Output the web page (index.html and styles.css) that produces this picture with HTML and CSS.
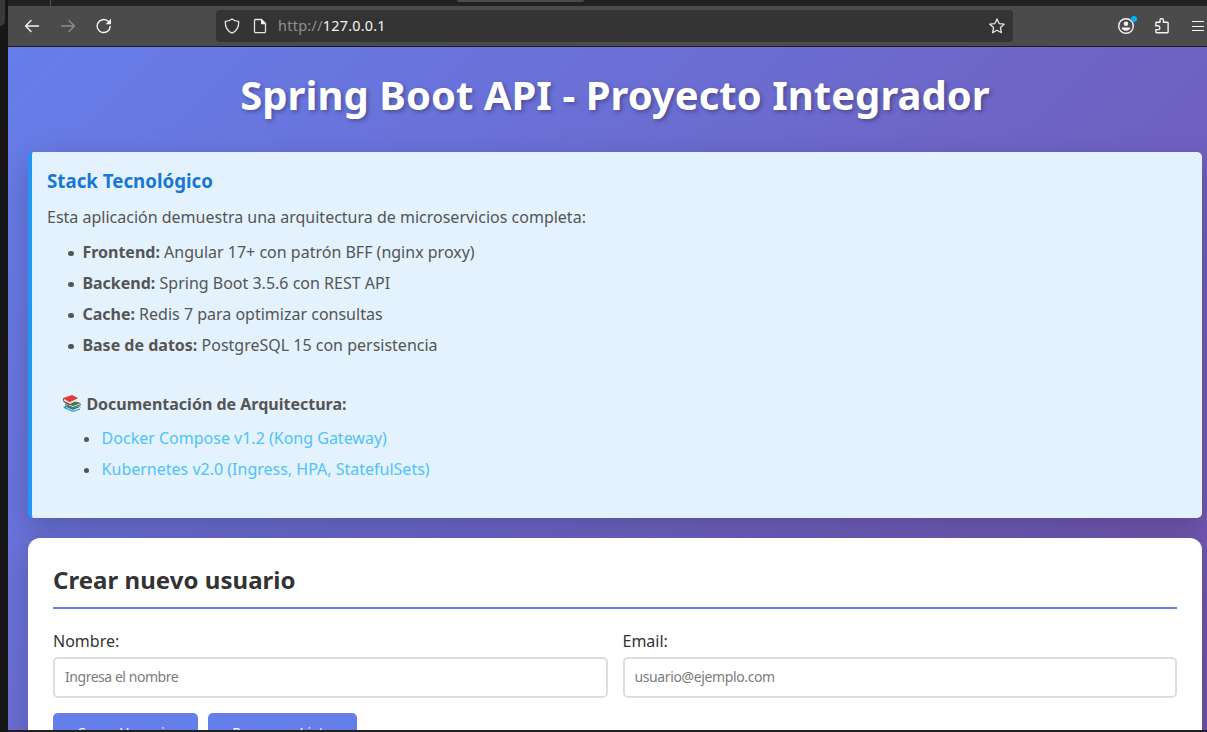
FILE: index.html
```
<!DOCTYPE html>
<html lang="es">
<head>
<meta charset="utf-8">
<title>Spring Boot API - Proyecto Integrador</title>
<link rel="stylesheet" href="styles.css">
</head>
<body>
<div class="desktop">
  <aside class="edge"><div class="edge-window"></div></aside>
  <div class="browser">
    <div class="tabstrip"><span class="tab-separator"></span><span class="tab-end"></span></div>
    <nav class="toolbar">
      <div class="nav-buttons">
        <svg class="icon" viewBox="0 0 16 16"><path d="M14.500 8H1.600M7 2.600 1.600 8 7 13.400"/></svg>
        <svg class="icon dim" viewBox="0 0 16 16"><path d="M1.500 8h12.900M9 2.600 14.400 8 9 13.400"/></svg>
        <svg class="icon reload-icon" viewBox="0 0 16 16"><path d="M14.200 8.400A6.500 6.500 0 1 1 11.800 3l1.400 1.300"/><path class="solid" d="M15 .8v5.400H9.600z"/></svg>
      </div>
      <div class="urlbar">
        <svg class="icon" viewBox="0 0 16 16"><path d="M8 .9c2 1.500 4.200 2.300 6.700 2.500.2 5.300-1.500 9.400-6.700 11.800C2.800 12.800 1.100 8.700 1.300 3.400 3.800 3.200 6 2.400 8 .9z"/></svg>
        <svg class="icon page-icon" viewBox="0 0 16 16"><path d="M3.500 1.500h6l4 4v8a1.200 1.200 0 0 1-1.200 1.200H3.700a1.200 1.200 0 0 1-1.200-1.200v-11a1 1 0 0 1 1-1z"/><path class="solid" d="M9 1.300v5h5z"/></svg>
        <span class="url"><span class="scheme">http://</span>127.0.0.1</span>
        <svg class="icon star" viewBox="0 0 16 16"><path d="m8 .9 2.100 4.700 5.100.6-3.800 3.400 1 5.100L8 12.200l-4.400 2.500 1-5.100L.8 6.200l5.100-.6z"/></svg>
      </div>
      <div class="actions">
        <svg class="icon account" viewBox="0 0 20 20"><circle cx="9" cy="11" r="7.300"/><circle class="solid" cx="9" cy="8.800" r="2.300"/><path class="solid" d="M4.700 12.500h8.600c0 1.700-1.800 3.300-4.300 3.300s-4.300-1.600-4.300-3.300z"/><circle class="notice" cx="17" cy="4" r="3"/></svg>
        <svg class="icon" viewBox="0 0 16 16"><path d="M2 7V4.200h4V2.300a1.700 1.700 0 0 1 3.400 0v1.900h3.900a.8.8 0 0 1 .8.800v9a.8.8 0 0 1-.8.800H2.700a.8.8 0 0 1-.8-.8v-2.400h2a1.900 1.900 0 0 0 0-3.800H1.500"/></svg>
        <svg class="icon menu" viewBox="0 0 12 12"><path d="M0 1.500h12M0 6.500h12M0 10.500h12"/></svg>
      </div>
    </nav>
    <div class="viewport">
      <div class="page">
        <h1>Spring Boot API - Proyecto Integrador</h1>
        <section class="stack">
          <h3>Stack Tecnológico</h3>
          <p>Esta aplicación demuestra una arquitectura de microservicios completa:</p>
          <ul class="tech">
            <li><strong>Frontend:</strong> Angular 17+ con patrón BFF (nginx proxy)</li>
            <li><strong>Backend:</strong> Spring Boot 3.5.6 con REST API</li>
            <li><strong>Cache:</strong> Redis 7 para optimizar consultas</li>
            <li><strong>Base de datos:</strong> PostgreSQL 15 con persistencia</li>
          </ul>
          <div class="docs">
            <div class="docs-title">
              <svg class="books" viewBox="0 0 20 19"><path fill="#1687b5" d="m1 13 9-3 9 3-8 4z"/><path fill="#e9eef0" d="m4 13 7 3 7-3v2l-7 2-7-3z"/><path fill="#238bb9" d="m2 13 9 4 7-2.500v1L11 18l-9-4z"/><path fill="#437b4b" d="m3 9 8-2 8 2-8 5z"/><path fill="#dce5d8" d="m5 10 6 2 7-2.500v2L11 14l-7-3z"/><path fill="#4b5d43" d="m3 10 8 3 8-3v1l-8 3-8-3z"/><path fill="#872d2b" d="m1 4 .5 4L7 11l8-5V4L7 8z"/><path fill="#eeeae2" d="m2 5 6 3 7-3.500v2L8 10 2 7z"/><path fill="#e53935" d="M1 4 10 1l6 3-9 4z"/></svg>
              <strong>Documentación de Arquitectura:</strong>
            </div>
            <ul class="links">
              <li><a href="#">Docker Compose v1.2 (Kong Gateway)</a></li>
              <li><a href="#">Kubernetes v2.0 (Ingress, HPA, StatefulSets)</a></li>
            </ul>
          </div>
        </section>
        <section class="card">
          <h2>Crear nuevo usuario</h2>
          <form>
            <div class="fields">
              <label>Nombre:<input type="text" placeholder="Ingresa el nombre"></label>
              <label>Email:<input class="email" type="email" placeholder="usuario@ejemplo.com"></label>
            </div>
            <div class="buttons">
              <button class="create" type="button">Crear Usuario</button>
              <button class="reload" type="button">Recargar Lista</button>
            </div>
          </form>
        </section>
      </div>
    </div>
  </div>
</div>
</body>
</html>
```
FILE: styles.css
```
* { box-sizing: border-box; }
body { margin: 0; overflow: hidden; font: 16px "Noto Sans", sans-serif; color: #333; }
h1, h2, h3, p, ul { margin: 0; }
.desktop { display: flex; width: 1207px; height: 732px; overflow: hidden; background: #202020; }
.edge { width: 8px; flex: none; background: #171717; }
.edge-window { width: 5px; height: 26px; background: #393939; border-radius: 0 0 5px 0; }
.browser { width: 1199px; height: 730px; display: flex; flex-direction: column; }
.tabstrip { height: 6px; flex: none; display: flex; background: #222; }
.tab-separator { width: 1px; height: 6px; margin-left: 42px; background: #555; }
.tab-end { width: 127px; height: 2px; margin-left: 406px; background: #4b4b4b; border-radius: 0 0 3px 3px; }
.toolbar { height: 41px; flex: none; display: flex; align-items: center; background: #4b4b4b; border-bottom: 1px solid #1c1c1c; }
.icon { display: block; width: 16px; height: 16px; flex: none; fill: none; stroke: #f4f4f4; stroke-width: 1.4; stroke-linecap: round; stroke-linejoin: round; }
.icon .solid { fill: #f4f4f4; stroke: none; }
.icon .notice { fill: #00b3f4; stroke: none; }
.dim { stroke: #8c8c8c; }
.nav-buttons { width: 208px; padding-left: 16px; display: flex; gap: 20px; }
.urlbar { width: 797px; height: 32px; padding: 0 8px; display: flex; align-items: center; background: #343434; border-radius: 4px; }
.urlbar .icon { stroke: #e4e4e4; stroke-width: 1.3; }
.page-icon { margin-left: 12px; }
.url { margin: -2px 0 0 10px; color: #f4f4f4; font-size: 14.4px; letter-spacing: .22px; }
.scheme { color: #919191; letter-spacing: .3px; }
.star { margin-left: auto; }
.actions { margin-left: 104px; display: flex; align-items: center; }
.account { width: 20px; height: 20px; margin: -2px 17px 0 0; }
.menu { width: 12px; height: 12px; margin-left: 22px; stroke-width: 1.2; stroke-linecap: butt; }
.viewport { flex: 1; min-height: 0; overflow: hidden; }
.page { width: 1214px; height: 960px; padding: 20px; background: linear-gradient(135deg, #667eea 0%, #764ba2 100%); }
h1 { height: 85px; color: #fff; font-size: 40px; line-height: 56px; letter-spacing: .03px; text-align: center; text-shadow: 2px 2px 4px rgba(0,0,0,.3); }
.stack { height: 366px; padding: 15px; background: #e3f2fd; border-left: 4px solid #2196f3; border-radius: 5px; box-shadow: 0 10px 30px rgba(0,0,0,.2); color: #555; }
.stack h3 { color: #1976d2; font-size: 18.72px; line-height: 27px; }
.stack p { margin-top: 10px; line-height: 26px; }
.tech { margin-top: 7px; padding-left: 35.4px; list-style: none; }
.tech li, .links li { height: 31px; line-height: 31px; }
.tech li::before, .links li::before { content: ""; display: inline-block; width: 5.5px; height: 5.5px; margin: 0 8.500px 2px -14px; border-radius: 50%; background: #555; }
.docs { margin-top: 28px; padding-left: 15px; }
.docs-title { display: flex; align-items: center; gap: 4.4px; height: 29px; }
.books { width: 20px; height: 19px; }
.links { margin-top: 5px; padding-left: 39.6px; list-style: none; }
.links li::before { margin: 0 12.500px 2px -18px; }
.links a { color: #4fc3f7; text-decoration: none; }
.card { height: 390px; margin-top: 20px; padding: 25px; background: #fff; border-radius: 12px; box-shadow: 0 10px 30px rgba(0,0,0,.2); }
.card h2 { height: 46px; border-bottom: 2px solid #667eea; font-size: 24px; line-height: 33px; letter-spacing: .04px; }
.fields { margin-top: 20px; display: grid; grid-template-columns: 1fr 1fr; gap: 15px; }
.fields label { line-height: 24px; }
.fields input { display: block; width: 100%; height: 41px; margin-top: 4px; padding: 0 10px 2px; border: 2px solid #ddd; border-radius: 5px; background: #fff; font: 14px "Noto Sans", sans-serif; letter-spacing: -.46px; }
.fields .email { letter-spacing: -.38px; }
.fields input::placeholder { color: #7c7c7c; }
.buttons { display: flex; gap: 10px; margin-top: 15px; }
.buttons button { height: 41px; padding: 0 0 3px; border: 0; border-radius: 5px; background: #667eea; color: #fff; font: 14px "Noto Sans", sans-serif; letter-spacing: .5px; }
.create { width: 145px; }
.reload { width: 149px; }
```
